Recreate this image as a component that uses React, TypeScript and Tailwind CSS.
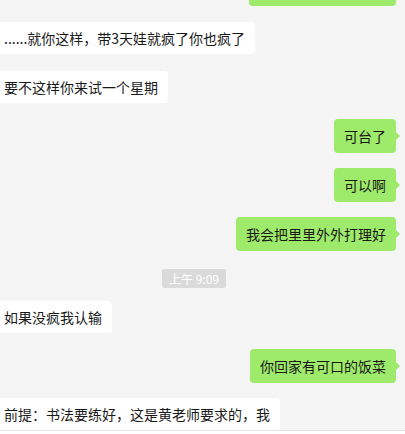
import React from "react";

const font = { fontFamily: '"Noto Sans CJK SC", "Noto Sans", sans-serif' };

function Left({ text, mt }: { text: string; mt: string }) {
  return (
    <div className={`flex ${mt}`}>
      <div className="ml-[-6px] bg-white rounded-[4px] pl-[10px] pr-[10px] py-[7px] text-[14px] leading-[18px] text-[#191919] whitespace-nowrap">
        {text}
      </div>
    </div>
  );
}

function Right({ text, mt }: { text: string; mt: string }) {
  return (
    <div className={`flex justify-end pr-[5px] ${mt}`}>
      <div className="flex items-center">
        <div className="bg-[#9eea6a] rounded-[4px] px-[10px] py-[8px] text-[14px] leading-[18px] text-[#191919] whitespace-nowrap">
          {text}
        </div>
        <div className="w-0 h-0 border-y-[4px] border-y-transparent border-l-[4px] border-l-[#9eea6a]" />
      </div>
    </div>
  );
}

export default function App() {
  return (
    <div
      className="w-[405px] h-[434px] overflow-hidden bg-[#f5f5f5] flex flex-col"
      style={font}
    >
      <div className="flex justify-end pr-[9px]">
        <div className="mt-[-28px] w-[147px] h-[34px] bg-[#9eea6a] rounded-[4px]" />
      </div>
      <Left mt="mt-[16px]" text="......就你这样，带3天娃就疯了你也疯了" />
      <Left mt="mt-[17px]" text="要不这样你来试一个星期" />
      <Right mt="mt-[16px]" text="可台了" />
      <Right mt="mt-[15px]" text="可以啊" />
      <Right mt="mt-[15px]" text="我会把里里外外打理好" />
      <div className="flex mt-[18px]">
        <div className="ml-[162px] w-[64px] bg-[#dadada] rounded-[2px] h-[19px] flex items-center justify-center text-[12px] leading-[19px] text-white whitespace-nowrap">
          上午 9:09
        </div>
      </div>
      <Left mt="mt-[13px]" text="如果没疯我认输" />
      <Right mt="mt-[16px]" text="你回家有可口的饭菜" />
      <Left mt="mt-[15px]" text="前提：书法要练好，这是黄老师要求的，我" />
      <div className="mt-0 border-t border-[#e6e6e6] bg-white flex-1" />
    </div>
  );
}
